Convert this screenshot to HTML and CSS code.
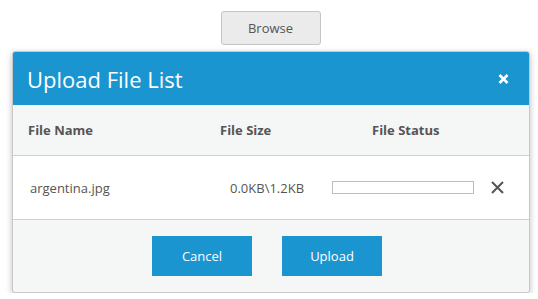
FILE: index.html
```html
<!DOCTYPE html>
<html lang="en">
<head>
    <meta charset="UTF-8">
    <title>Upload File List</title>
    <link rel="stylesheet" href="styles.css">
</head>
<body>
    <div class="top-bar">
        <button class="browse-btn">Browse</button>
    </div>

    <!-- 上传列表弹窗 -->
    <div class="dialog">
        <div class="dialog-header">
            <span class="dialog-title">Upload File List</span>
            <svg class="dialog-close" width="11" height="10" viewBox="0 0 11 10">
                <path d="M1.5 1 L9.5 9 M9.5 1 L1.5 9" stroke="white" stroke-width="2.6"/>
            </svg>
        </div>
        <div class="file-row file-head">
            <div class="col-name">File Name</div>
            <div class="col-size">File Size</div>
            <div class="col-status">File Status</div>
        </div>
        <div class="file-row file-item">
            <div class="col-name">argentina.jpg</div>
            <div class="col-size">0.0KB\1.2KB</div>
            <div class="col-status">
                <div class="progress"><div class="progress-bar" style="width: 0%"></div></div>
                <svg class="remove-icon" width="13" height="13" viewBox="0 0 13 13">
                    <path d="M1 1 L12 12 M12 1 L1 12" stroke="#555" stroke-width="2"/>
                </svg>
            </div>
        </div>
        <div class="dialog-footer">
            <button class="action-btn">Cancel</button>
            <button class="action-btn">Upload</button>
        </div>
    </div>
</body>
</html>
```

FILE: styles.css
```css
body {
    font-family: "Open Sans", "Noto Sans", sans-serif;
    background-color: #ffffff;
    margin: 0;
    padding: 11px 8px 0 12px;
    color: #555;
}

.top-bar {
    display: flex;
    justify-content: center;
    padding-right: 1px;
}

.browse-btn {
    width: 100px;
    height: 34px;
    font-family: inherit;
    font-size: 13px;
    color: #555;
    background-color: #ebebec;
    border: 1px solid #c4c4c4;
    border-radius: 3px;
}

.dialog {
    margin-top: 6px;
    width: 516px;
    border: 1px solid #c8c8c8;
    border-radius: 3px;
    background-color: #f5f6f6;
    box-shadow: 0 2px 6px rgba(0, 0, 0, 0.25);
    overflow: hidden;
}

.dialog-header {
    height: 53px;
    background-color: #1b95d0;
    color: white;
    display: flex;
    align-items: center;
    justify-content: space-between;
    padding: 0 20px 0 14px;
}

.dialog-title {
    font-size: 22px;
}

.file-row {
    display: flex;
    align-items: center;
    padding-left: 15px;
    font-size: 13px;
}

.file-head {
    height: 50px;
    font-weight: bold;
    border-bottom: 1px solid #cfcfcf;
}

.file-item {
    height: 63px;
    background-color: white;
    border-bottom: 1px solid #cfcfcf;
}

.col-name {
    width: 192px;
}

.file-item .col-name {
    padding-left: 2px;
    width: 190px;
}

.col-size {
    width: 152px;
}

.file-item .col-size {
    padding-left: 10px;
    width: 102px;
}

.col-status {
    display: flex;
    align-items: center;
}

.progress {
    width: 140px;
    height: 11px;
    border: 1px solid #bdbdbd;
    background-color: white;
}

.progress-bar {
    height: 100%;
    background-color: #1b95d0;
}

.remove-icon {
    margin-left: 17px;
}

.dialog-footer {
    height: 72px;
    display: flex;
    justify-content: center;
    align-items: center;
    gap: 30px;
    padding-right: 8px;
}

.action-btn {
    width: 100px;
    height: 40px;
    background-color: #1b95d0;
    color: white;
    border: none;
    font-family: inherit;
    font-size: 13px;
}
```
